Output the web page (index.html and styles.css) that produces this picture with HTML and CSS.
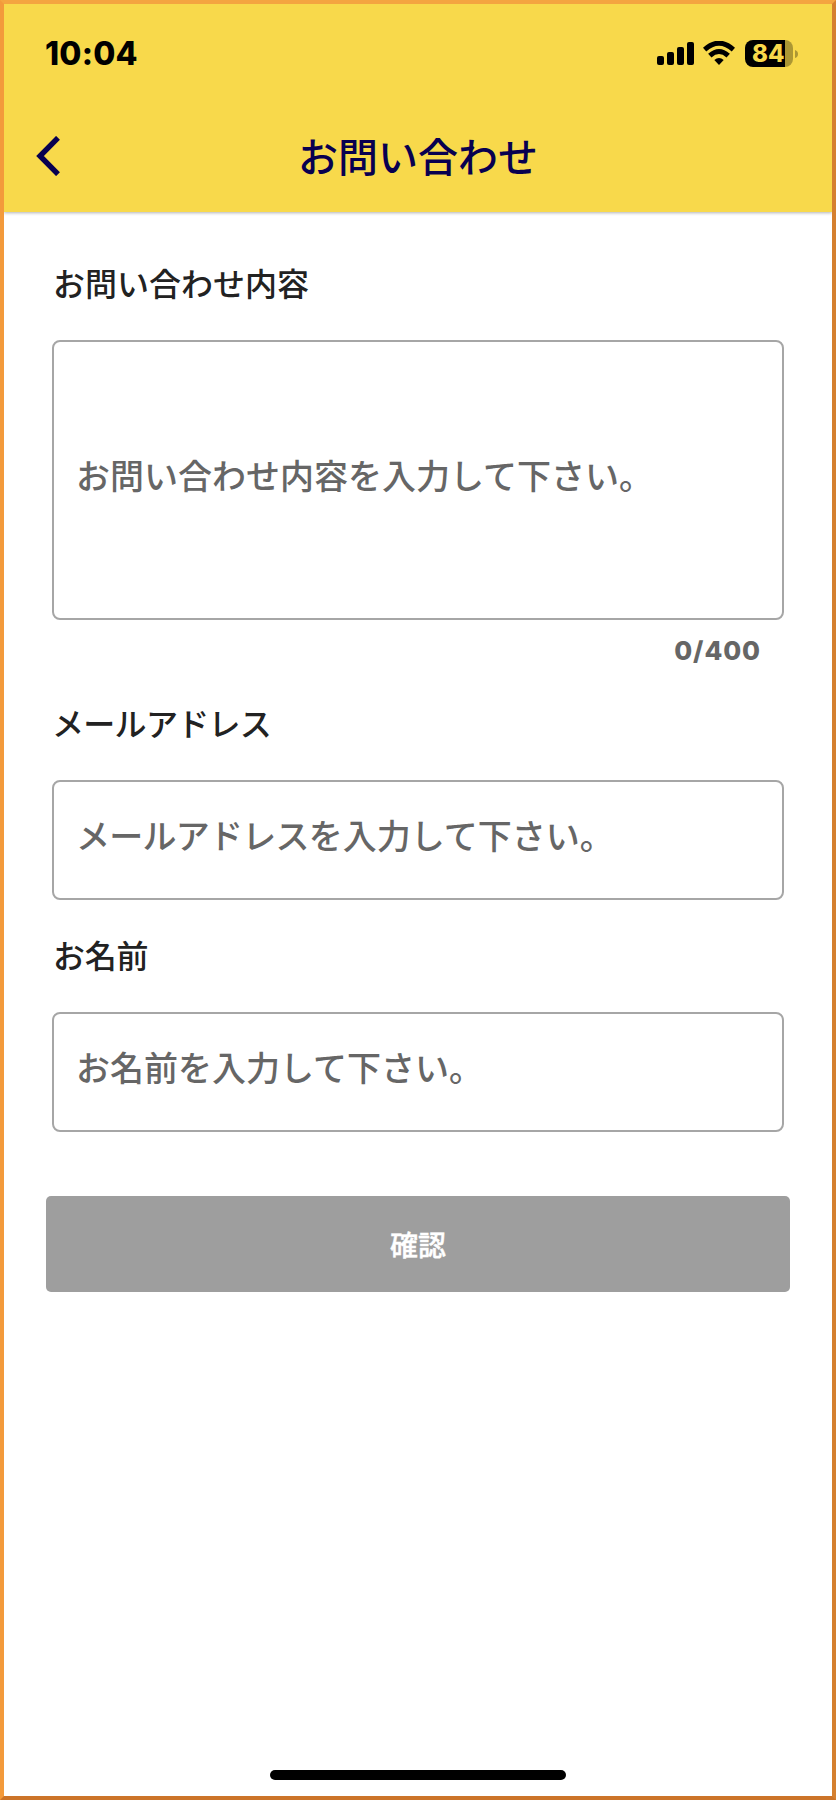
FILE: index.html
```html
<!DOCTYPE html>
<html lang="ja">
<head>
<meta charset="utf-8">
<title>お問い合わせ</title>
<link rel="stylesheet" href="styles.css">
</head>
<body>
<div class="screen">
  <header class="header">
    <div class="status">
      <span class="time">10:04</span>
      <div class="indicators">
        <svg class="signal" width="38" height="24" viewBox="0 0 38 24"><rect x="0" y="14" width="7" height="9" rx="2"/><rect x="10" y="10" width="7" height="13" rx="2"/><rect x="20" y="5" width="7" height="18" rx="2"/><rect x="30" y="0" width="7" height="23" rx="2"/></svg>
        <svg class="wifi" width="32" height="24" viewBox="0 0 32 24"><path d="M1.6 8.6Q16-4.2 30.4 8.6" fill="none" stroke="#000" stroke-width="5"/><path d="M6.8 14.6Q16 6.4 25.2 14.6" fill="none" stroke="#000" stroke-width="5"/><path d="M11.3 19Q16 15 20.7 19L16 24z"/></svg>
        <div class="battery"><span class="level">84</span></div>
        <svg class="cap" width="3" height="8" viewBox="0 0 3 8"><path d="M0 0Q3 1 3 4T0 8z"/></svg>
      </div>
    </div>
    <div class="nav">
      <svg class="back" width="24" height="40" viewBox="0 0 24 40"><path d="M22 1.8L4 20l18 18.2" fill="none" stroke="#080050" stroke-width="5.4"/></svg>
      <h1 class="title">お問い合わせ</h1>
    </div>
  </header>
  <main class="form">
    <label class="label" for="body">お問い合わせ内容</label>
    <div class="field tall" id="body">お問い合わせ内容を入力して下さい。</div>
    <div class="counter">0/400</div>
    <label class="label mail" for="mail">メールアドレス</label>
    <div class="field" id="mail"><span class="kana">メールアドレス</span>を入力して下さい。</div>
    <label class="label name" for="name">お名前</label>
    <div class="field" id="name">お名前を入力して下さい。</div>
    <button class="submit">確認</button>
  </main>
  <div class="home"></div>
</div>
</body>
</html>
```
FILE: styles.css
```css
* { box-sizing: border-box; }
body { margin: 0; font-family: "Noto Sans CJK JP", sans-serif; }
.screen {
  display: flex; flex-direction: column;
  width: 836px; height: 1800px;
  border: 4px solid; border-color: #f4a540 #d5802f #cc7429 #f39a3b;
  background: #fff;
}
.header { height: 208px; background: #f8d94b; box-shadow: 0 1px 3px rgba(0,0,0,.3); clip-path: inset(0 0 -6px 0); }
.status { display: flex; justify-content: space-between; height: 100px; padding: 33px 34px 0 41px; }
.time { font: 800 32px/34px Inter, sans-serif; letter-spacing: .2px; color: #000; }
.indicators { display: flex; align-items: flex-start; padding-top: 3px; }
.signal { margin-top: 2px; margin-right: 8px; }
.wifi { margin-top: 1px; margin-right: 10px; }
.battery { width: 48px; height: 27px; border-radius: 8px; background: linear-gradient(90deg, #000 40px, #ac9734 40px); }
.level { display: block; padding-left: 7px; font: 800 24px/27px Inter, sans-serif; color: #f8d94b; }
.cap { margin: 10px 0 0 2px; fill: #ac9734; }
.nav { display: grid; grid-template-columns: 60px 1fr 60px; padding-top: 32px; }
.back { margin-left: 32px; }
.title { margin: -1.5px 0 0; text-align: center; font-size: 40px; line-height: 40px; font-weight: 500; color: #080050; }
.form { display: flex; flex-direction: column; padding: 48px 48px 0; }
.label { height: 80px; padding-left: 1px; font-size: 32px; line-height: 44px; font-weight: 500; color: #222; }
.field {
  display: flex; align-items: center; height: 120px; padding: 0 22px 10px;
  border: 2px solid #a6a6a6; border-radius: 8px; background: #fff;
  font-size: 34px; line-height: 50px; font-weight: 500; color: #666;
}
.kana { letter-spacing: -.75px; }
.tall { height: 280px; }
.counter { margin-top: 14px; height: 34px; padding-right: 23px; text-align: right; font: 800 26px/34px Inter, sans-serif; letter-spacing: .9px; color: #666; }
.mail { margin-top: 32px; padding-left: 0; letter-spacing: -.7px; }
.name { margin-top: 32px; letter-spacing: -.3px; }
.submit {
  height: 96px; margin: 64px -6px 0; padding: 0; border: 0; border-radius: 5px;
  background: #9e9e9e; color: #fff; font: 500 28px/40px "Noto Sans CJK JP", sans-serif;
  -webkit-text-stroke: .4px #fff;
}
.home { width: 296px; height: 10px; margin: auto auto 16px 266px; border-radius: 5px; background: #000; }
```
